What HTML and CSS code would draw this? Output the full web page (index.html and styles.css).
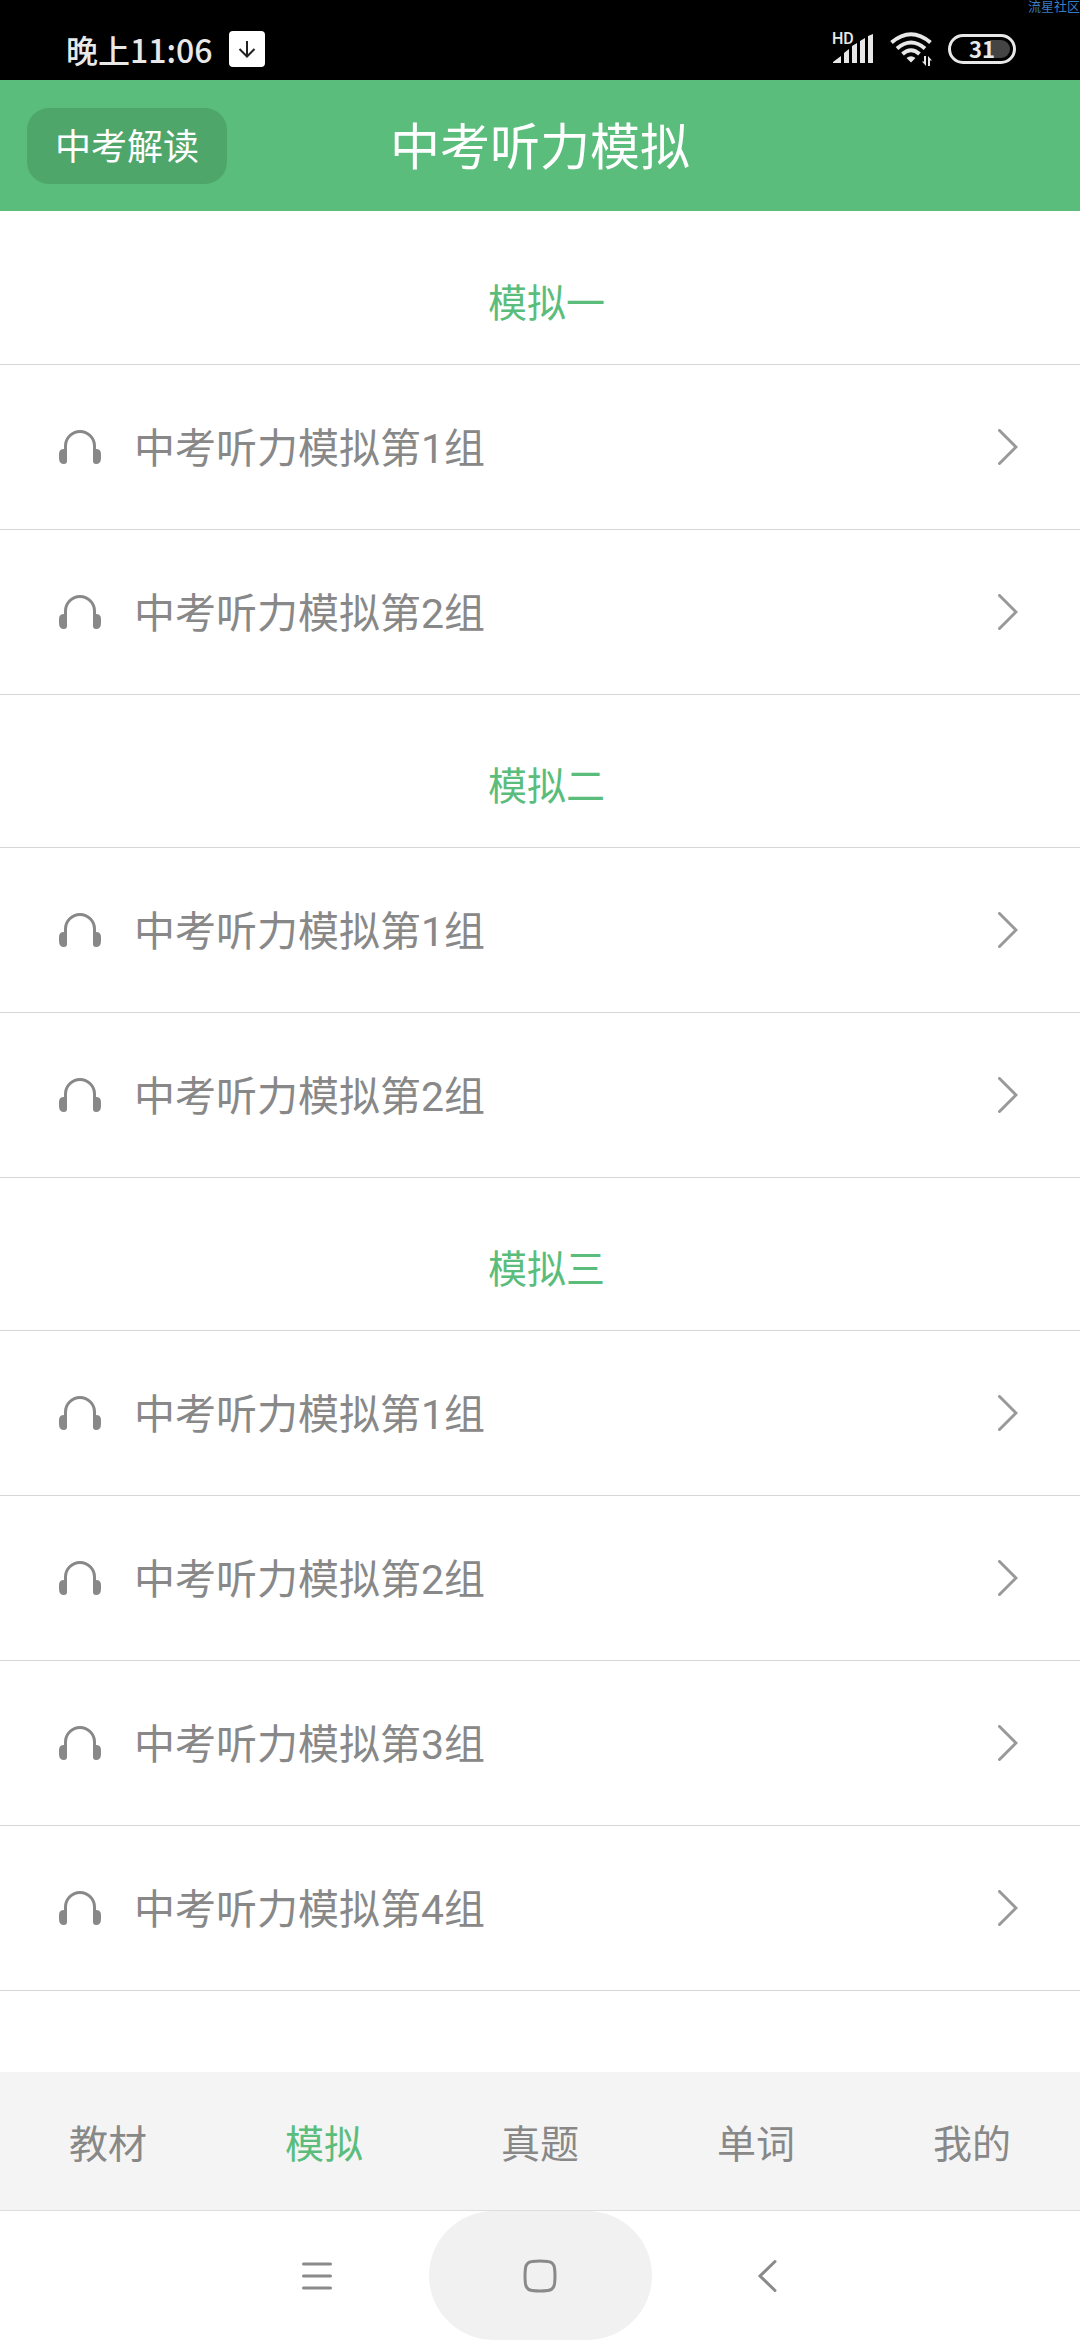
FILE: index.html
```html
<!DOCTYPE html>
<html lang="zh-CN">
  <head>
    <meta charset="UTF-8" />
    <meta name="viewport" content="width=device-width, initial-scale=1.0" />
    <title>中考听力模拟</title>
    <link rel="stylesheet" href="styles.css" />
  </head>
  <body>
    <!-- icons used more than once -->
    <svg class="sprite" aria-hidden="true">
      <symbol id="headphone" viewBox="0 0 44 36">
        <path d="M7.500 22V17A14.500 14.500 0 0 1 36.500 17V22" fill="none" stroke="currentColor" stroke-width="3" />
        <path d="M9 20V32Q9 35 6 35Q1 35 1 29V25Q1 20 6 20ZM35 20V32Q35 35 38 35Q43 35 43 29V25Q43 20 38 20Z" fill="currentColor" />
      </symbol>
      <symbol id="arrow" viewBox="0 0 20 36">
        <path d="M1.500 1.500L18 18L1.500 34.500" fill="none" stroke="#999" stroke-width="3" stroke-linecap="round" />
      </symbol>
    </svg>

    <div class="status-bar">
      <div class="status-group">
        <span class="time">晚上11:06</span>
        <svg class="download" viewBox="0 0 36 36">
          <rect width="36" height="36" rx="4" fill="#fff" />
          <path d="M18 10V25M10.500 18L18 25.500L25.500 18" fill="none" stroke="#222" stroke-width="2" />
        </svg>
      </div>
      <div class="status-group status-right">
        <div class="signal">
          <span class="hd">HD</span>
          <svg viewBox="0 0 41 30" fill="#e8e8e8">
            <path d="M0 29V28L8 22V29ZM11 19L16 15V29H11ZM19 12L24 9V29H19ZM27 7L32 4V29H27ZM35 2L40 0V29H35Z" />
          </svg>
        </div>
        <svg class="wifi" viewBox="0 0 42 34">
          <g fill="none" stroke="#e8e8e8" stroke-width="4">
            <path d="M1.500 10.500Q21 -6 40.500 10.500" />
            <path d="M7 16.500Q21 4.500 35 16.500" />
            <path d="M12.500 22Q21 14.500 29.500 22" />
          </g>
          <path d="M16.500 26Q21 22.500 25.500 26L21 30.500ZM36 24V34L32 29.500H34V24ZM38 34V24L42 28.500H40V34Z" fill="#e8e8e8" />
        </svg>
        <div class="battery">31</div>
      </div>
      <span class="watermark">流星社区</span>
    </div>

    <header class="header">
      <button type="button" class="explain">中考解读</button>
      <h1>中考听力模拟</h1>
    </header>

    <main class="content">
      <section>
        <h2>模拟一</h2>
        <ul class="list">
          <li><a href="#"><svg class="headphone"><use href="#headphone" /></svg><span>中考听力模拟第1组</span><svg class="arrow"><use href="#arrow" /></svg></a></li>
          <li><a href="#"><svg class="headphone"><use href="#headphone" /></svg><span>中考听力模拟第2组</span><svg class="arrow"><use href="#arrow" /></svg></a></li>
        </ul>
      </section>
      <section>
        <h2>模拟二</h2>
        <ul class="list">
          <li><a href="#"><svg class="headphone"><use href="#headphone" /></svg><span>中考听力模拟第1组</span><svg class="arrow"><use href="#arrow" /></svg></a></li>
          <li><a href="#"><svg class="headphone"><use href="#headphone" /></svg><span>中考听力模拟第2组</span><svg class="arrow"><use href="#arrow" /></svg></a></li>
        </ul>
      </section>
      <section>
        <h2>模拟三</h2>
        <ul class="list">
          <li><a href="#"><svg class="headphone"><use href="#headphone" /></svg><span>中考听力模拟第1组</span><svg class="arrow"><use href="#arrow" /></svg></a></li>
          <li><a href="#"><svg class="headphone"><use href="#headphone" /></svg><span>中考听力模拟第2组</span><svg class="arrow"><use href="#arrow" /></svg></a></li>
          <li><a href="#"><svg class="headphone"><use href="#headphone" /></svg><span>中考听力模拟第3组</span><svg class="arrow"><use href="#arrow" /></svg></a></li>
          <li><a href="#"><svg class="headphone"><use href="#headphone" /></svg><span>中考听力模拟第4组</span><svg class="arrow"><use href="#arrow" /></svg></a></li>
        </ul>
      </section>
    </main>

    <nav class="tabs">
      <a href="#">教材</a>
      <a href="#" class="active">模拟</a>
      <a href="#">真题</a>
      <a href="#">单词</a>
      <a href="#">我的</a>
    </nav>

    <div class="system-nav">
      <button type="button" aria-label="菜单">
        <svg viewBox="0 0 36 36"><path d="M4.500 6H31.500M4.500 18H31.500M4.500 30H31.500" /></svg>
      </button>
      <button type="button" class="pressed" aria-label="主页">
        <svg viewBox="0 0 36 36"><path d="M10 3.500Q18 2.500 26 3.500Q31.500 4 32.500 10Q33.500 18 32.500 26Q31.500 32 26 32.500Q18 33.500 10 32.500Q4.500 32 3.500 26Q2.500 18 3.500 10Q4.500 4 10 3.500Z" /></svg>
      </button>
      <button type="button" aria-label="返回">
        <svg viewBox="0 0 36 36"><path d="M30 3.500L15 18L30 32.500" /></svg>
      </button>
    </div>
  </body>
</html>
```
FILE: styles.css
```css
* {
  box-sizing: border-box;
}
body {
  margin: 0;
  min-height: 100vh;
  display: flex;
  flex-direction: column;
  background: #fff;
  color: #888;
  font-family: Roboto, "Noto Sans CJK SC", sans-serif;
}
a {
  color: inherit;
  text-decoration: none;
}
button {
  border: none;
  font-family: inherit;
  cursor: pointer;
}
.sprite {
  position: absolute;
  width: 0;
  height: 0;
}

/* status bar */
.status-bar {
  position: relative;
  display: flex;
  justify-content: space-between;
  height: 80px;
  padding: 18px 64px 0 66px;
  background: #000;
  color: #e8e8e8;
}
.status-group {
  display: flex;
  align-items: center;
  height: 62px;
  gap: 16px;
}
.time {
  font-family: "Noto Sans CJK SC", sans-serif;
  font-size: 32px;
  font-weight: 500;
}
.download {
  width: 36px;
  height: 36px;
}
.signal {
  position: relative;
  width: 41px;
  height: 30px;
}
.signal svg {
  display: block;
  width: 41px;
  height: 30px;
}
.hd {
  position: absolute;
  top: -3px;
  left: -1px;
  font-size: 16px;
  line-height: 16px;
  font-weight: 500;
}
.wifi {
  width: 42px;
  height: 34px;
}
.battery {
  width: 68px;
  height: 30px;
  padding: 3px;
  border: 3px solid #e8e8e8;
  border-radius: 15px;
  background: linear-gradient(to right, #000 65%, #444 65%) content-box;
  font-family: "Noto Sans CJK SC", sans-serif;
  font-size: 22px;
  line-height: 16px;
  font-weight: 700;
  text-align: center;
}
.watermark {
  position: absolute;
  top: 0;
  right: 0;
  color: #3a7cc0;
  font-size: 13px;
  line-height: 13px;
}

/* header */
.header {
  display: grid;
  grid-template-columns: 1fr auto 1fr;
  align-items: center;
  height: 131px;
  padding: 0 27px;
  background: #5abd7c;
  color: #fff;
}
.header h1 {
  margin: 0;
  padding-bottom: 5px;
  font-size: 50px;
  font-weight: 400;
}
.explain {
  justify-self: start;
  width: 200px;
  height: 76px;
  padding: 0 0 3px;
  border-radius: 22px;
  background: #4fa66b;
  color: #fff;
  font-size: 36px;
}

/* list */
.content {
  flex: 1;
  padding-top: 1px;
}
.content h2 {
  margin: 0;
  padding: 63px 0 30px 13px;
  border-bottom: 1px solid #d6d6d6;
  color: #5abd7c;
  font-size: 39px;
  line-height: 59px;
  font-weight: 400;
  text-align: center;
}
.list {
  margin: 0;
  padding: 0;
  list-style: none;
}
.list a {
  display: flex;
  align-items: center;
  height: 165px;
  padding: 0 62px 0 58px;
  border-bottom: 1px solid #d6d6d6;
  font-size: 41px;
}
.list span {
  padding-bottom: 4px;
}
.headphone {
  width: 44px;
  height: 36px;
  margin-right: 32px;
}
.arrow {
  width: 20px;
  height: 36px;
  margin-left: auto;
}

/* bottom tabs */
.tabs {
  display: flex;
  height: 139px;
  border-bottom: 1px solid #ddd;
  background: #f4f4f4;
}
.tabs a {
  flex: 1;
  padding-top: 8px;
  font-size: 39px;
  line-height: 130px;
  text-align: center;
}
.tabs .active {
  color: #5abd7c;
}

.system-nav {
  display: flex;
  justify-content: center;
  height: 129px;
}
.system-nav button {
  display: flex;
  align-items: center;
  justify-content: center;
  width: 223px;
  padding: 0;
  border-radius: 65px;
  background: none;
}
.system-nav .pressed {
  background: #f1f1f1;
}
.system-nav svg {
  width: 36px;
  height: 36px;
  fill: none;
  stroke: #8a8a8a;
  stroke-width: 3;
  stroke-linecap: round;
}
```
